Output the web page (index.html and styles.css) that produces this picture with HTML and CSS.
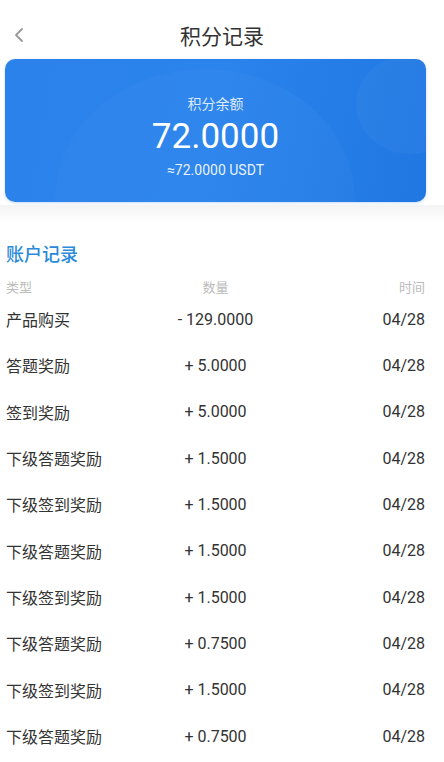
FILE: index.html
```html
<!DOCTYPE html>
<html lang="zh">
<head>
  <meta charset="UTF-8" />
  <meta name="viewport" content="width=device-width, initial-scale=1.0"/>
  <title>积分记录</title>
  <link rel="stylesheet" href="styles.css">
</head>
<body>
  <div class="topbar">
    <span class="back">
      <svg width="12" height="16" viewBox="0 0 12 16"><polyline points="8,2 2,8 8,14" fill="none" stroke="#999" stroke-width="1.8" stroke-linecap="round" stroke-linejoin="round"/></svg>
    </span>
    <div class="title">积分记录</div>
  </div>

  <div class="card">
    <div class="card-label">积分余额</div>
    <div class="card-amount">72.0000</div>
    <div class="card-usdt">≈72.0000 USDT</div>
  </div>

  <div class="gap"></div>

  <div class="records">
    <div class="records-title">账户记录</div>
    <div class="row head">
      <span>类型</span><span>数量</span><span>时间</span>
    </div>
    <div class="row"><span>产品购买</span><span>- 129.0000</span><span>04/28</span></div>
    <div class="row"><span>答题奖励</span><span>+ 5.0000</span><span>04/28</span></div>
    <div class="row"><span>签到奖励</span><span>+ 5.0000</span><span>04/28</span></div>
    <div class="row"><span>下级答题奖励</span><span>+ 1.5000</span><span>04/28</span></div>
    <div class="row"><span>下级签到奖励</span><span>+ 1.5000</span><span>04/28</span></div>
    <div class="row"><span>下级答题奖励</span><span>+ 1.5000</span><span>04/28</span></div>
    <div class="row"><span>下级签到奖励</span><span>+ 1.5000</span><span>04/28</span></div>
    <div class="row"><span>下级答题奖励</span><span>+ 0.7500</span><span>04/28</span></div>
    <div class="row"><span>下级签到奖励</span><span>+ 1.5000</span><span>04/28</span></div>
    <div class="row"><span>下级答题奖励</span><span>+ 0.7500</span><span>04/28</span></div>
  </div>
</body>
</html>
```

FILE: styles.css
```css
body {
  margin: 0;
  background: #fff;
  color: #333;
  font-family: Roboto, "Noto Sans CJK SC", sans-serif;
  overflow: hidden;
}
.topbar {
  position: relative;
  height: 46px;
  padding-top: 12px;
  display: flex;
  align-items: center;
  justify-content: center;
}
.back {
  position: absolute;
  left: 14px;
  top: 27px;
  line-height: 0;
}
.title {
  font-size: 21px;
  color: #333;
}
.card {
  position: relative;
  overflow: hidden;
  margin: 1px 18px 0 5px;
  height: 143px;
  border-radius: 10px;
  background: linear-gradient(100deg, #2b82ea 0%, #2a84ec 50%, #2077e2 100%);
  color: #fff;
  display: flex;
  flex-direction: column;
  align-items: center;
  box-shadow: 0 1px 3px rgba(30, 110, 220, 0.25);
}
.card::before {
  content: "";
  position: absolute;
  left: 50px;
  top: 10px;
  width: 300px;
  height: 260px;
  border-radius: 50%;
  background: rgba(255, 255, 255, 0.025);
}
.card::after {
  content: "";
  position: absolute;
  right: -40px;
  top: -5px;
  width: 110px;
  height: 100px;
  border-radius: 50%;
  background: rgba(255, 255, 255, 0.035);
}
.card-label {
  margin-top: 35px;
  font-size: 14px;
  line-height: 20px;
  color: rgba(255, 255, 255, 0.85);
}
.card-amount {
  font-size: 35px;
  line-height: 40px;
  margin-top: 3px;
}
.card-usdt {
  font-size: 14px;
  line-height: 18px;
  margin-top: 4px;
  color: rgba(255, 255, 255, 0.92);
}
.gap {
  height: 18px;
  margin-top: 3px;
  background: linear-gradient(#f4f4f4, #fafafa 60%, #fff);
}
.records {
  padding: 0 19px 0 6px;
}
.records-title {
  margin-top: 20px;
  font-size: 18px;
  line-height: 24px;
  font-weight: 500;
  color: #2b8ad9;
}
.row {
  display: grid;
  grid-template-columns: 1fr 1fr 1fr;
  align-items: center;
  height: 46.33px;
  font-size: 16px;
}
.row span:nth-child(2) {
  text-align: center;
}
.row span:nth-child(3) {
  text-align: right;
}
.row.head {
  height: 20px;
  margin-top: 9px;
  font-size: 13px;
  color: #bbb;
}
```
